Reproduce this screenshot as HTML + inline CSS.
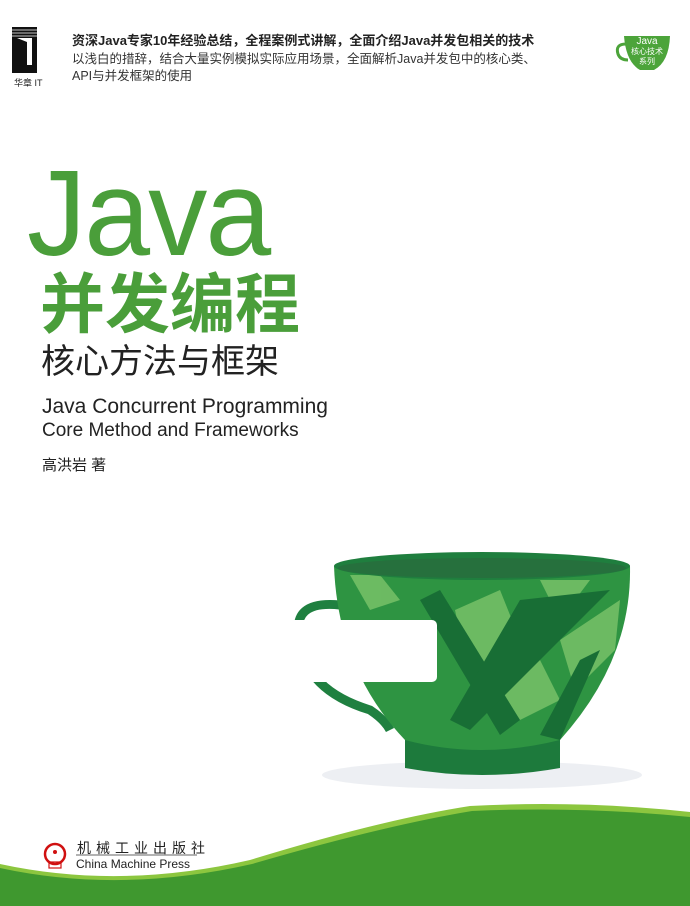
<!DOCTYPE html>
<html><head><meta charset="utf-8"><style>
*{margin:0;padding:0}
body{width:690px;height:906px;position:relative;overflow:hidden;background:#fff;font-family:"Liberation Sans","Noto Sans CJK SC",sans-serif}
.a{position:absolute;white-space:nowrap}
</style></head><body>
<svg class="a" style="left:0;top:0" width="690" height="906" viewBox="0 0 690 906">
 <rect x="12" y="27" width="25" height="40" fill="#111"/>
 <g stroke="#fff" stroke-width="0.8"><line x1="12" y1="30" x2="37" y2="30"/><line x1="12" y1="33" x2="37" y2="33"/><line x1="12" y1="36" x2="37" y2="36"/></g>
 <rect x="17" y="38" width="15" height="27" fill="#fff"/>
 <polygon points="17,38 27,42 27,67 17,65" fill="#111"/>
 <rect x="12" y="67" width="25" height="6" fill="#111"/>
 <path d="M624 36 H670 Q669 62 654 70 H640 Q626 62 624 36Z" fill="#4ca43a"/>
 <path d="M626 44 Q615 44 618 54 Q620 60 628 60" fill="none" stroke="#4ca43a" stroke-width="3"/>
 <ellipse cx="482" cy="775" rx="160" ry="14" fill="#e6e8ee" opacity="0.7"/>
 <path d="M340 605 Q290 600 300 640 Q305 690 370 710 Q385 720 390 730" fill="none" stroke="#1f8040" stroke-width="9"/>
 <path d="M405 735 H560 V768 Q482 782 405 768Z" fill="#1d7a3c"/>
 <path d="M334 566 Q338 670 405 740 Q480 760 560 740 Q632 660 630 566Z" fill="#2e9442"/>
 <g fill="#7cc46a" opacity="0.8">
  <polygon points="350,575 380,575 400,600 370,610"/>
  <polygon points="455,610 500,590 520,640 470,680"/>
  <polygon points="540,580 590,580 560,620"/>
  <polygon points="560,640 620,600 615,650 575,690"/>
  <polygon points="500,690 540,660 560,700 520,720"/>
 </g>
 <g fill="#186e35">
  <polygon points="420,600 440,590 520,720 500,735"/>
  <polygon points="520,600 610,590 470,730 450,720"/>
  <polygon points="580,660 600,650 560,740 540,735"/>
 </g>
 <ellipse cx="482" cy="566" rx="148" ry="14" fill="#1f7e3e"/>
 <ellipse cx="482" cy="568" rx="144" ry="10" fill="#26703d"/>
 <rect x="260" y="620" width="177" height="62" rx="5" fill="#fff"/>
 <path d="M0 864 Q120 890 250 860 Q380 820 470 806 Q580 800 690 812 V906 H0Z" fill="#8cc63f"/>
 <path d="M0 868 Q120 894 252 864 Q382 826 472 811 Q580 806 690 817 V906 H0Z" fill="#3f982f"/>
 <circle cx="55" cy="854" r="10" fill="none" stroke="#d01010" stroke-width="2.5"/>
 <circle cx="55" cy="852" r="2" fill="#d01010"/>
 <rect x="49" y="862" width="12" height="6" fill="none" stroke="#d01010" stroke-width="1.2"/>
 <line x1="76" y1="855" x2="197" y2="855" stroke="#333" stroke-width="0.8"/>
</svg>
<div class="a" style="left:14px;top:76px;font-size:9px;color:#222">华章 IT</div>
<div class="a" style="left:622px;top:37px;width:50px;text-align:center;font-size:10px;line-height:10px;color:#fff">Java<br><span style="font-size:8px">核心技术</span><br><span style="font-size:8px">系列</span></div>
<div class="a" style="left:72px;top:30px;font-size:13px;font-weight:bold;color:#222">资深Java专家10年经验总结，全程案例式讲解，全面介绍Java并发包相关的技术</div>
<div class="a" style="left:72px;top:48px;font-size:12.5px;color:#333">以浅白的措辞，结合大量实例模拟实际应用场景，全面解析Java并发包中的核心类、</div>
<div class="a" style="left:72px;top:65px;font-size:12.5px;color:#333">API与并发框架的使用</div>
<div class="a" style="left:27px;top:143px;font-size:122px;color:#4a9e3a;letter-spacing:-2px;transform:scaleX(0.97);transform-origin:left">Java</div>
<div class="a" style="left:40px;top:270px;font-size:65px;font-weight:bold;color:#4a9e3a;line-height:70px">并发编程</div>
<div class="a" style="left:41px;top:341px;font-size:34px;color:#222;line-height:42px">核心方法与框架</div>
<div class="a" style="left:42px;top:395px;font-size:21px;color:#222">Java Concurrent Programming</div>
<div class="a" style="left:42px;top:420px;font-size:19px;color:#222">Core Method and Frameworks</div>
<div class="a" style="left:42px;top:454px;font-size:15px;color:#222">高洪岩 著</div>
<div class="a" style="left:77px;top:838px;font-size:14px;color:#222;letter-spacing:5px">机械工业出版社</div>
<div class="a" style="left:76px;top:857px;font-size:12px;color:#222">China Machine Press</div>
</body></html>
